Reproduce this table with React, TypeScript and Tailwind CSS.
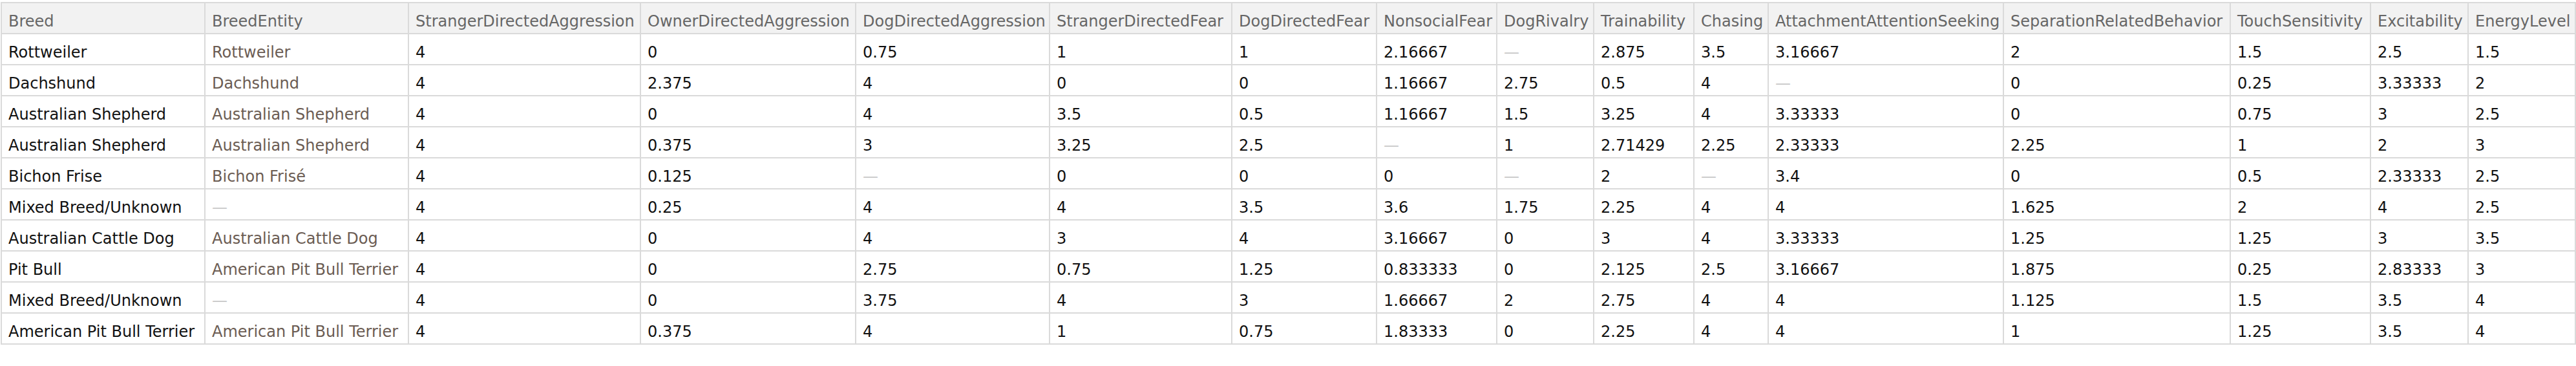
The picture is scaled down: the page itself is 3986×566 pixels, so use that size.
import React from "react";

type Cell = string | null;

const COLUMNS: { name: string; w: string }[] = [
  { name: "Breed", w: "w-[315px]" },
  { name: "BreedEntity", w: "w-[315px]" },
  { name: "StrangerDirectedAggression", w: "w-[359px]" },
  { name: "OwnerDirectedAggression", w: "w-[333px]" },
  { name: "DogDirectedAggression", w: "w-[300px]" },
  { name: "StrangerDirectedFear", w: "w-[282px]" },
  { name: "DogDirectedFear", w: "w-[224px]" },
  { name: "NonsocialFear", w: "w-[186px]" },
  { name: "DogRivalry", w: "w-[150px]" },
  { name: "Trainability", w: "w-[155px]" },
  { name: "Chasing", w: "w-[115px]" },
  { name: "AttachmentAttentionSeeking", w: "w-[364px]" },
  { name: "SeparationRelatedBehavior", w: "w-[351px]" },
  { name: "TouchSensitivity", w: "w-[217px]" },
  { name: "Excitability", w: "w-[151px]" },
  { name: "EnergyLevel", w: "w-[166px]" },
];

const ROWS: Cell[][] = [
  ["Rottweiler", "Rottweiler", "4", "0", "0.75", "1", "1", "2.16667", null, "2.875", "3.5", "3.16667", "2", "1.5", "2.5", "1.5"],
  ["Dachshund", "Dachshund", "4", "2.375", "4", "0", "0", "1.16667", "2.75", "0.5", "4", null, "0", "0.25", "3.33333", "2"],
  ["Australian Shepherd", "Australian Shepherd", "4", "0", "4", "3.5", "0.5", "1.16667", "1.5", "3.25", "4", "3.33333", "0", "0.75", "3", "2.5"],
  ["Australian Shepherd", "Australian Shepherd", "4", "0.375", "3", "3.25", "2.5", null, "1", "2.71429", "2.25", "2.33333", "2.25", "1", "2", "3"],
  ["Bichon Frise", "Bichon Frisé", "4", "0.125", null, "0", "0", "0", null, "2", null, "3.4", "0", "0.5", "2.33333", "2.5"],
  ["Mixed Breed/Unknown", null, "4", "0.25", "4", "4", "3.5", "3.6", "1.75", "2.25", "4", "4", "1.625", "2", "4", "2.5"],
  ["Australian Cattle Dog", "Australian Cattle Dog", "4", "0", "4", "3", "4", "3.16667", "0", "3", "4", "3.33333", "1.25", "1.25", "3", "3.5"],
  ["Pit Bull", "American Pit Bull Terrier", "4", "0", "2.75", "0.75", "1.25", "0.833333", "0", "2.125", "2.5", "3.16667", "1.875", "0.25", "2.83333", "3"],
  ["Mixed Breed/Unknown", null, "4", "0", "3.75", "4", "3", "1.66667", "2", "2.75", "4", "4", "1.125", "1.5", "3.5", "4"],
  ["American Pit Bull Terrier", "American Pit Bull Terrier", "4", "0.375", "4", "1", "0.75", "1.83333", "0", "2.25", "4", "4", "1", "1.25", "3.5", "4"],
];

function Missing() {
  return <span className="text-[#c8c8c8]">—</span>;
}

export default function App() {
  return (
    <div className="bg-white min-h-[566px] pt-[3px] pl-px font-['DejaVu_Sans',sans-serif] text-[24px]">
      <table className="table-fixed border-collapse w-[3983px]">
        <colgroup>
          {COLUMNS.map((c) => (
            <col key={c.name} className={c.w} />
          ))}
        </colgroup>
        <thead>
          <tr className="h-[48px] bg-[#f2f2f2]">
            {COLUMNS.map((c) => (
              <th
                key={c.name}
                className="border-2 border-[#dadada] pl-[10px] pr-0 pt-[9px] text-left font-normal text-[#666666] whitespace-nowrap overflow-hidden leading-none"
              >
                {c.name}
              </th>
            ))}
          </tr>
        </thead>
        <tbody>
          {ROWS.map((row, i) => (
            <tr key={i} className="h-[48px]">
              {row.map((cell, j) => (
                <td
                  key={j}
                  className={`border-2 border-[#dadada] pl-[10px] pr-0 pt-[9px] whitespace-nowrap overflow-hidden leading-none ${
                    j === 1 ? "text-[#6b5c53]" : "text-[#111111]"
                  }`}
                >
                  {cell === null ? <Missing /> : cell}
                </td>
              ))}
            </tr>
          ))}
        </tbody>
      </table>
    </div>
  );
}
